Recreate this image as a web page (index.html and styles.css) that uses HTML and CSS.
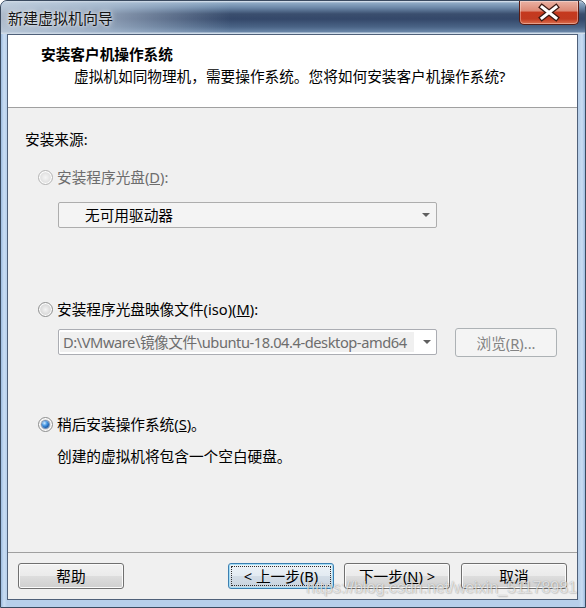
FILE: index.html
```html
<!DOCTYPE html>
<html lang="zh-CN">
<head>
<meta charset="utf-8">
<title>新建虚拟机向导</title>
<link rel="stylesheet" href="styles.css">
</head>
<body>
<div class="window">
  <div class="titlebar">
    <span class="title">新建虚拟机向导</span>
    <div class="close">
      <svg width="58" height="23" viewBox="0 0 58 23">
        <path d="M22 6 L36 17 M36 6 L22 17" stroke="#3b1a14" stroke-width="5.5" stroke-linecap="square" fill="none"/>
        <path d="M22 6 L36 17 M36 6 L22 17" stroke="#ffffff" stroke-width="3" stroke-linecap="square" fill="none"/>
      </svg>
    </div>
  </div>
  <div class="client">
    <div class="header">
      <div class="h-title">安装客户机操作系统</div>
      <div class="h-sub">虚拟机如同物理机，需要操作系统。您将如何安装客户机操作系统?</div>
    </div>
    <div class="content">
      <div class="label">安装来源:</div>
      <div class="radio-row row1 disabled"><span class="radio"></span><span>安装程序光盘(<u>D</u>):</span></div>
      <div class="combo combo1"><span class="combo-text">无可用驱动器</span><span class="arrow"></span></div>
      <div class="radio-row row2"><span class="radio"></span><span>安装程序光盘映像文件(iso)(<u>M</u>):</span></div>
      <div class="iso-row">
        <div class="combo combo2"><span class="edit">D:\VMware\镜像文件\ubuntu-18.04.4-desktop-amd64</span><span class="arrow"></span></div>
        <div class="btn btn-disabled browse">浏览(<u>R</u>)...</div>
      </div>
      <div class="radio-row row3"><span class="radio checked"></span><span>稍后安装操作系统(<u>S</u>)。</span></div>
      <div class="desc">创建的虚拟机将包含一个空白硬盘。</div>
    </div>
    <div class="footer">
      <div class="btn">帮助</div>
      <div class="btn btn-default back"><span class="focus">&lt; 上一步(B)</span></div>
      <div class="btn next">下一步(<u>N</u>) &gt;</div>
      <div class="btn cancel">取消</div>
    </div>
  </div>
  <div class="watermark">https://blog.csdn.net/weixin_51178981</div>
</div>
</body>
</html>
```

FILE: styles.css
```css
html, body {
  margin: 0;
  padding: 0;
  background: #ffffff;
}

body {
  font-family: "Noto Sans", "Noto Sans CJK SC", sans-serif;
  font-size: 14.67px;
  line-height: 20px;
  color: #000000;
}

.window {
  position: relative;
  width: 586px;
  height: 608px;
  box-sizing: border-box;
  border: 1px solid #3a4a5f;
  border-radius: 7px 7px 0 0;
  background: linear-gradient(90deg, #9fbde0 0, #c9ddf3 3px, #b7cfea 6px, #b7cfea calc(100% - 6px), #c9ddf3 calc(100% - 3px), #9fbde0 100%);
  display: flex;
  flex-direction: column;
  overflow: hidden;
}

.titlebar {
  height: 33px;
  flex: none;
  display: flex;
  justify-content: space-between;
  align-items: flex-start;
  padding-left: 7px;
  background:
    linear-gradient(90deg, rgba(205, 216, 228, 0.8) 0, rgba(190, 204, 220, 0.6) 110px, rgba(170, 190, 212, 0) 230px),
    linear-gradient(180deg, #e6edf5 0, #8ea9c4 2px, #6a86a6 7px, #3a4e6e 13px, #34486a 18px, #4a6486 26px, #6a86a8 31px, #d2dfec 32px, #d2dfec 33px);
  border-radius: 6px 6px 0 0;
}

.title {
  margin-top: 7px;
  line-height: 20px;
  font-size: 15px;
  color: #151515;
  text-shadow: 0 0 6px rgba(255, 255, 255, 0.9), 0 0 3px rgba(255, 255, 255, 0.8);
}

.close {
  width: 60px;
  height: 24px;
  box-sizing: border-box;
  margin-right: 6px;
  border: 1px solid #5a1b12;
  border-top: none;
  border-radius: 0 0 5px 5px;
  background: linear-gradient(180deg, #eab2a4 0%, #dc8a76 42%, #c5391e 50%, #c13a20 78%, #dd7050 100%);
  box-shadow: inset 0 0 0 1px rgba(255, 255, 255, 0.35);
  display: flex;
  align-items: center;
  justify-content: center;
}

.close svg {
  display: block;
}

.client {
  flex: 1;
  margin: 0 7px 7px 6px;
  border: 1px solid #4f6079;
  background: #f0f0f0;
  display: flex;
  flex-direction: column;
  min-height: 0;
}

.header {
  flex: none;
  background: #ffffff;
  border-bottom: 1px solid #a0a0a0;
  padding-top: 9px;
  height: 63px;
}

.h-title {
  padding-left: 33px;
  font-weight: bold;
}

.h-sub {
  margin-top: 2px;
  padding-left: 66px;
}

.content {
  flex: 1;
  padding: 21px 0 0 17px;
}

.label {
  line-height: 20px;
}

.radio-row {
  display: flex;
  align-items: center;
  height: 20px;
  margin-left: 13px;
}

.radio-row .radio {
  margin-right: 4px;
}

.row1 {
  margin-top: 18px;
}

.row2 {
  margin-top: 71px;
}

.row3 {
  margin-top: 57px;
}

.disabled {
  color: #6d6d6d;
}

.radio {
  width: 15px;
  height: 15px;
  box-sizing: border-box;
  border-radius: 50%;
  border: 1px solid #8e8f8f;
  background: radial-gradient(circle at 50% 50%, #f4f4f4 0, #dcdcdc 50%, #e9e9e9 75%, #fafafa 100%);
  box-shadow: inset 0 0 0 1px #ffffff;
  display: flex;
  align-items: center;
  justify-content: center;
  flex: none;
}

.disabled .radio {
  border-color: #b4b4b4;
  background: radial-gradient(circle at 50% 50%, #f5f5f5 0, #e3e3e3 50%, #ececec 75%, #f8f8f8 100%);
}

.radio.checked::after {
  content: "";
  width: 7px;
  height: 7px;
  border-radius: 50%;
  background: radial-gradient(circle at 35% 30%, #d4ecff 0, #4f9de6 35%, #1a5fb0 70%, #0d3d7c 100%);
  box-shadow: 0 0 0 1px rgba(30, 80, 150, 0.55);
}

.combo {
  display: flex;
  align-items: center;
  box-sizing: border-box;
  width: 379px;
  height: 26px;
  margin-left: 33px;
  border: 1px solid #adadad;
  border-radius: 2px;
  background: #f4f4f4;
}

.combo1 {
  margin-top: 15px;
}

.combo-text {
  padding-left: 26px;
  color: #000000;
}

.arrow {
  margin-left: auto;
  margin-right: 6px;
  width: 0;
  height: 0;
  border-left: 4px solid transparent;
  border-right: 4px solid transparent;
  border-top: 4px solid #5f5f5f;
}

.iso-row {
  display: flex;
  align-items: flex-start;
  margin-top: 9px;
}

.combo2 {
  margin-top: 1px;
  background: #ffffff;
  border-color: #abadb3;
}

.edit {
  width: 351px;
  height: 20px;
  margin-left: 1px;
  padding-left: 3px;
  background: #f0f0f0;
  color: #6d6d6d;
  white-space: nowrap;
  overflow: hidden;
  line-height: 20px;
  letter-spacing: -0.45px;
}

.combo2 .arrow {
  margin-right: 5px;
}

.btn {
  box-sizing: border-box;
  width: 106px;
  height: 26px;
  border: 1px solid #707070;
  border-radius: 3px;
  background: linear-gradient(180deg, #f2f2f2 0%, #ebebeb 48%, #dddddd 52%, #cfcfcf 100%);
  box-shadow: inset 0 0 0 1px #fbfbfb;
  display: flex;
  align-items: center;
  justify-content: center;
  line-height: 20px;
}

.btn-disabled {
  background: #f4f4f4;
  border-color: #adb2b5;
  box-shadow: none;
  color: #838383;
}

.browse {
  width: 102px;
  height: 29px;
  margin-left: 18px;
}

.desc {
  margin-top: 12px;
  margin-left: 32px;
}

.footer {
  flex: none;
  display: flex;
  border-top: 1px solid #a0a0a0;
  padding: 10px 10px 10px 10px;
}

.btn-default {
  border-color: #3c7fb1;
  background: linear-gradient(180deg, #eef3f8 0%, #e3ebf2 48%, #d3dde7 52%, #c8d3de 100%);
  box-shadow: inset 0 0 0 1px #a6def6;
}

.back {
  margin-left: auto;
}

.focus {
  display: flex;
  align-items: center;
  justify-content: center;
  width: 98px;
  height: 18px;
  outline: 1px dotted #303030;
}

.next {
  margin-left: 10px;
}

.cancel {
  margin-left: 11px;
}

.watermark {
  position: absolute;
  left: 305px;
  top: 579px;
  font-family: "Liberation Sans", sans-serif;
  font-size: 16px;
  line-height: 16px;
  color: rgba(255, 255, 255, 0.7);
  text-shadow: 0 0 1px rgba(0, 0, 0, 0.35), 1px 1px 1px rgba(0, 0, 0, 0.12);
  white-space: nowrap;
  pointer-events: none;
}
```
